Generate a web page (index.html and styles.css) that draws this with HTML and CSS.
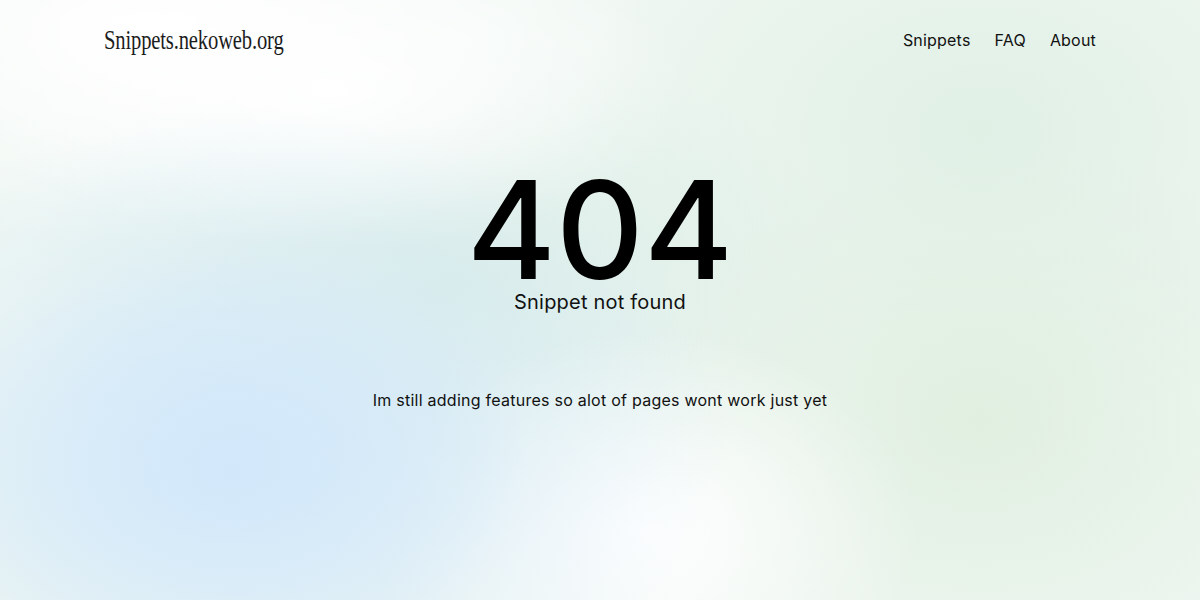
FILE: index.html
```html
<!DOCTYPE html>
<html lang="en">
<head>
<meta charset="utf-8">
<title>404 - Snippets.nekoweb.org</title>
<link rel="stylesheet" href="styles.css">
</head>
<body>
<div class="page">
  <header class="header">
    <a class="logo" href="#"><span>Snippets.nekoweb.org</span></a>
    <nav class="nav">
      <a href="#">Snippets</a>
      <a href="#">FAQ</a>
      <a href="#">About</a>
    </nav>
  </header>
  <main class="main">
    <h1 class="code">404</h1>
    <p class="sub">Snippet not found</p>
    <p class="note">Im still adding features so alot of pages wont work just yet</p>
  </main>
</div>
</body>
</html>
```
FILE: styles.css
```css
html, body {
  margin: 0;
  padding: 0;
  height: 100%;
}
body {
  font-family: "Inter", "Lato", sans-serif;
  color: #111;
  background-color: #f1f7f3;
  background-image:
    radial-gradient(ellipse 300px 220px at 230px 470px, rgba(210,232,250,1), rgba(210,232,250,0)),
    radial-gradient(ellipse 480px 330px at 250px 440px, rgba(215,235,249,1), rgba(215,235,249,0)),
    radial-gradient(ellipse 280px 200px at 640px 530px, rgba(255,255,255,1), rgba(255,255,255,0)),
    radial-gradient(ellipse 520px 220px at 150px 30px, rgba(255,255,255,1), rgba(255,255,255,0)),
    radial-gradient(ellipse 360px 160px at 330px 90px, rgba(255,255,255,0.9), rgba(255,255,255,0)),
    radial-gradient(ellipse 380px 280px at 980px 420px, rgba(224,239,224,1), rgba(224,239,224,0)),
    radial-gradient(ellipse 420px 260px at 440px 290px, rgba(216,236,230,1), rgba(216,236,230,0)),
    radial-gradient(ellipse 420px 300px at 980px 130px, rgba(224,240,229,1), rgba(224,240,229,0)),
    linear-gradient(180deg, #eff7f2, #eef6f1);
  overflow: hidden;
}
.page {
  width: 992px;
  margin: 0 auto;
  height: 600px;
  display: flex;
  flex-direction: column;
}
.header {
  display: flex;
  justify-content: space-between;
  align-items: center;
  height: 80px;
}
.logo {
  color: #1c1c1c;
  text-decoration: none;
  font-family: "Liberation Serif", serif;
  font-size: 28px;
  display: inline-block;
  transform: scaleX(0.735);
  transform-origin: left center;
  letter-spacing: -0.2px;
}
.nav {
  display: flex;
  gap: 24px;
}
.nav a {
  color: #111;
  text-decoration: none;
  font-size: 16px;
  letter-spacing: 0.2px;
}
.main {
  display: flex;
  flex-direction: column;
  align-items: center;
}
.code {
  margin: 90px 0 0;
  font-size: 136px;
  font-weight: 500;
  line-height: 0.88;
  letter-spacing: 0;
  color: #000;
}
.sub {
  margin: 0;
  font-size: 20px;
  letter-spacing: 0.2px;
}
.note {
  margin: 76px 0 0;
  font-size: 16px;
  letter-spacing: 0.25px;
}
```
